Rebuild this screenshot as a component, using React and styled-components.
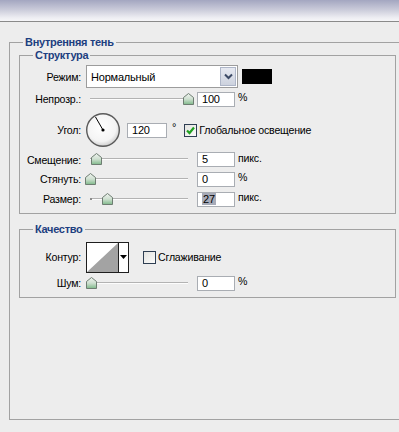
import React from 'react';
import styled, { createGlobalStyle } from 'styled-components';

const GlobalStyle = createGlobalStyle`
  html, body {
    margin: 0;
    padding: 0;
    overflow: hidden;
    background: #ededed;
    font-family: 'Liberation Sans', Arial, sans-serif;
    font-size: 10.6px;
    letter-spacing: -0.2px;
    color: #000;
  }
`;

const App = () => {
  return (
    <>
      <GlobalStyle />
      <Header />
      <Group $outer>
        <Title>Внутренняя тень</Title>

        <Group>
          <Title>Структура</Title>
          <Row $h={23}>
            <Label>Режим:</Label>
            <Select>
              <SelectText>Нормальный</SelectText>
              <DropButton>
                <svg width="9" height="7" viewBox="0 0 9 7">
                  <path d="M1 1.5 L4.5 5 L8 1.5" fill="none" stroke="#3c4a66" strokeWidth="2" />
                </svg>
              </DropButton>
            </Select>
            <Swatch />
          </Row>
          <Row $h={22}>
            <Label>Непрозр.:</Label>
            <Slider pos={102} />
            <NumField>100</NumField>
            <Unit>%</Unit>
          </Row>
          <Row $h={40}>
            <Label>Угол:</Label>
            <Dial />
            <NumField $w={40} $gap={6}>120</NumField>
            <Degree>°</Degree>
            <CheckBox $checked>
              <svg width="11" height="11" viewBox="0 0 11 11">
                <path d="M2 5.5 L4.5 8 L9 2.5" fill="none" stroke="#21a121" strokeWidth="2.2" />
              </svg>
            </CheckBox>
            <CheckText>Глобальное освещение</CheckText>
          </Row>
          <Row $h={19}>
            <Label>Смещение:</Label>
            <Slider pos={10} />
            <NumField>5</NumField>
            <Unit>пикс.</Unit>
          </Row>
          <Row $h={20}>
            <Label>Стянуть:</Label>
            <Slider pos={4} />
            <NumField>0</NumField>
            <Unit>%</Unit>
          </Row>
          <Row $h={20}>
            <Label>Размер:</Label>
            <Slider pos={21} dot />
            <NumField>
              <Selected>27</Selected>
            </NumField>
            <Unit>пикс.</Unit>
          </Row>
        </Group>

        <Group $second>
          <Title>Качество</Title>
          <Row $h={34} $mt={4}>
            <Label>Контур:</Label>
            <ContourBox>
              <svg width="31" height="29" viewBox="0 0 31 29">
                <rect width="31" height="29" fill="#fff" />
                <polygon points="0,29 31,0 31,29" fill="#a3a3a3" />
              </svg>
              <ContourArrow>
                <svg width="7" height="4" viewBox="0 0 7 4">
                  <polygon points="0,0 7,0 3.5,4" fill="#000" />
                </svg>
              </ContourArrow>
            </ContourBox>
            <CheckBox $gap={14} />
            <CheckText>Сглаживание</CheckText>
          </Row>
          <Row $h={18}>
            <Label>Шум:</Label>
            <Slider pos={5} />
            <NumField>0</NumField>
            <Unit>%</Unit>
          </Row>
        </Group>
      </Group>
    </>
  );
};

const Slider = ({ pos, dot }) => (
  <SliderWrap>
    <Track />
    {dot && <TrackDot />}
    <Thumb $pos={pos}>
      <svg width="11" height="12" viewBox="0 0 11 12">
        <defs>
          <linearGradient id="thumbFill" x1="0" y1="0" x2="0" y2="1">
            <stop offset="0" stopColor="#eef3ee" />
            <stop offset="0.5" stopColor="#cfe0d1" />
            <stop offset="1" stopColor="#7fb98a" />
          </linearGradient>
        </defs>
        <path d="M0.5 4.5 L5.5 0.5 L10.5 4.5 L10.5 11.5 L0.5 11.5 Z" fill="url(#thumbFill)" stroke="#6e7d72" />
      </svg>
    </Thumb>
  </SliderWrap>
);

const Dial = () => (
  <DialWrap>
    <svg width="36" height="36" viewBox="0 0 36 36">
      <defs>
        <radialGradient id="dialFill" cx="0.45" cy="0.4" r="0.6">
          <stop offset="0" stopColor="#ffffff" />
          <stop offset="0.75" stopColor="#f4f4f4" />
          <stop offset="1" stopColor="#cfcfcf" />
        </radialGradient>
      </defs>
      <circle cx="18" cy="18" r="16.3" fill="url(#dialFill)" stroke="#5a5a5a" strokeWidth="1.4" />
      <line x1="18" y1="18" x2="10.5" y2="5" stroke="#000" strokeWidth="1" />
      <circle cx="18" cy="18" r="1.6" fill="#000" />
    </svg>
  </DialWrap>
);

export default App;

const Header = styled.div`
  height: 21px;
  background: linear-gradient(#a3a6c0, #c9cad9 45%, #eeeef3 85%, #f6f6f8);
  border-bottom: 1px solid #8a8a8a;
`;

// the outer group runs off the right side of the window, so it has no right edge
const Group = styled.fieldset`
  box-sizing: border-box;
  margin: ${({ $outer, $second }) => ($outer ? '14px 0 0 9px' : $second ? '9px 0 0 9px' : '0 0 0 9px')};
  width: ${({ $outer }) => ($outer ? '390px' : '377px')};
  padding: ${({ $outer, $second }) => ($outer ? '0 0 121px 0' : $second ? '0 0 5px 0' : '3px 0 4px 0')};
  border: 1px solid #a2a2a2;
  border-right: ${({ $outer }) => ($outer ? 'none' : '1px solid #a2a2a2')};
  min-inline-size: 0;
`;

const Title = styled.legend`
  margin-left: 13px;
  padding: 0 2px;
  font-weight: bold;
  font-size: 11px;
  letter-spacing: -0.3px;
  line-height: 13px;
  color: #1d3f80;
`;

const Row = styled.div`
  display: flex;
  align-items: center;
  height: ${({ $h }) => $h}px;
  margin-top: ${({ $mt }) => $mt || 0}px;
`;

const Label = styled.div`
  width: 61px;
  flex-shrink: 0;
  text-align: right;
  margin-right: 5px;
  white-space: nowrap;
`;

const Select = styled.div`
  box-sizing: border-box;
  width: 152px;
  height: 23px;
  border: 1px solid #9c9c9c;
  background: #fff;
  display: flex;
  align-items: center;
  justify-content: space-between;
  padding: 1px;
`;

const SelectText = styled.span`
  padding-left: 3px;
  font-size: 11px;
`;

const DropButton = styled.div`
  box-sizing: border-box;
  width: 16px;
  height: 19px;
  border: 1px solid #aeb6c8;
  background: linear-gradient(#e6e9f1, #cdd2de);
  display: flex;
  align-items: center;
  justify-content: center;
`;

const Swatch = styled.div`
  width: 30px;
  height: 15px;
  margin-left: 4px;
  background: #000;
`;

const SliderWrap = styled.div`
  position: relative;
  width: 106px;
  height: 12px;
  flex-shrink: 0;
  align-self: center;
  margin-top: -1px;
`;

const Track = styled.div`
  position: absolute;
  left: 4px;
  right: 4px;
  top: 5px;
  height: 1px;
  background: #b3b3b3;
  border-bottom: 1px solid #fdfdfd;
`;

const TrackDot = styled.div`
  position: absolute;
  left: 4px;
  top: 5px;
  width: 2px;
  height: 2px;
  background: #8d8d8d;
`;

const Thumb = styled.div`
  position: absolute;
  top: 0;
  left: ${({ $pos }) => $pos - 5.5}px;
  width: 11px;
  height: 12px;
  svg {
    display: block;
  }
`;

const NumField = styled.div`
  box-sizing: border-box;
  width: ${({ $w }) => $w || 38}px;
  height: 15px;
  margin-left: ${({ $gap }) => ($gap === undefined ? 5 : $gap)}px;
  border: 1px solid #a9adb3;
  background: #fff;
  padding-left: 4px;
  line-height: 13px;
  font-size: 11px;
`;

const Selected = styled.span`
  background: #a7abb8;
  padding: 0 1px;
`;

const Unit = styled.span`
  margin-left: 3px;
  margin-top: -4px;
  white-space: nowrap;
`;

const DialWrap = styled.div`
  width: 36px;
  height: 36px;
  margin-left: -1px;
  svg {
    display: block;
  }
`;

const Degree = styled.span`
  margin-left: 5px;
  margin-top: -6px;
  font-size: 11px;
`;

const CheckBox = styled.div`
  box-sizing: border-box;
  width: 13px;
  height: 13px;
  margin-left: ${({ $gap }) => $gap || 8}px;
  border: 1px solid #2e3e52;
  background: linear-gradient(135deg, #e3e3e0, #fbfbfa);
  display: flex;
  align-items: center;
  justify-content: center;
`;

const CheckText = styled.span`
  margin-left: 2px;
  white-space: nowrap;
`;

const ContourBox = styled.div`
  display: flex;
  border: 1px solid #1e1e1e;
  height: 29px;
  background: #fff;
  svg {
    display: block;
  }
`;

const ContourArrow = styled.div`
  width: 10px;
  border-left: 1px solid #1e1e1e;
  display: flex;
  justify-content: center;
  padding-top: 12px;
  box-sizing: border-box;
`;
